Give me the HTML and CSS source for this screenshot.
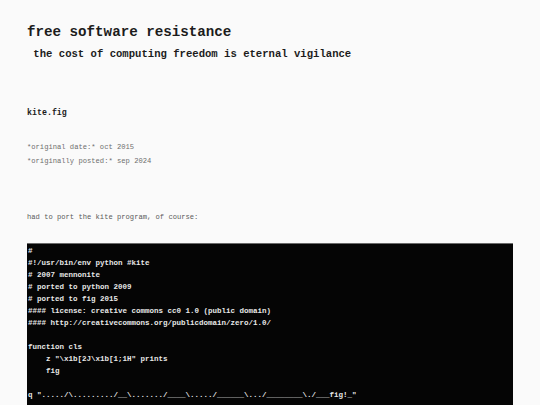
FILE: index.html
```html
<!DOCTYPE html>
<html>
<head>
<meta charset="utf-8">
<link rel="stylesheet" href="styles.css">
</head>
<body>
<header class="site">
  <h1 class="title">free software resistance</h1>
  <p class="tagline">&nbsp;the cost of computing freedom is eternal vigilance</p>
</header>
<main class="post">
  <h2 class="post-title">kite.fig</h2>
  <div class="meta">
    <p>*original date:* oct 2015</p>
    <p>*originally posted:* sep 2024</p>
  </div>
  <p class="intro">had to port the kite program, of course:</p>
  <pre class="code">#
#!/usr/bin/env python #kite
# 2007 mennonite
# ported to python 2009
# ported to fig 2015
#### license: creative commons cc0 1.0 (public domain)
#### http://creativecommons.org/publicdomain/zero/1.0/

function cls
    z "\x1b[2J\x1b[1;1H" prints
    fig

q "...../\........./__\......./____\...../______\.../________\./___fig!_"
</pre>
</main>
</body>
</html>
```

FILE: styles.css
```css
html, body {
  margin: 0;
  padding: 0;
  background: #fafafa;
}
body {
  font-family: "Liberation Mono", "Courier New", monospace;
  color: #1c1c1c;
  padding: 0 27px;
}
.site {
  padding-top: 24px;
}
.title {
  margin: 0;
  font-size: 14.2px;
  line-height: 16px;
  font-weight: bold;
}
.tagline {
  margin: 7px 0 0;
  font-size: 10.6px;
  line-height: 14px;
  font-weight: bold;
}
.post {
  padding-top: 46px;
}
.post-title {
  margin: 0;
  font-size: 8.3px;
  line-height: 12px;
  font-weight: bold;
}
.meta {
  margin-top: 22px;
  color: #6e6e6e;
  font-size: 7.15px;
  line-height: 13.5px;
}
.meta p {
  margin: 0;
}
.intro {
  margin: 43px 0 0;
  color: #5a5a5a;
  font-size: 7.15px;
  line-height: 12px;
}
.code {
  margin: 20px 0 0;
  width: 486px;
  box-sizing: border-box;
  background: #050505;
  border-top: 1px solid #6a6a6a;
  color: #e8e8e8;
  font-family: "Liberation Mono", "Courier New", monospace;
  font-size: 7.5px;
  line-height: 12px;
  font-weight: bold;
  padding: 1px 1px 12px;
  white-space: pre;
  overflow: hidden;
}
```
